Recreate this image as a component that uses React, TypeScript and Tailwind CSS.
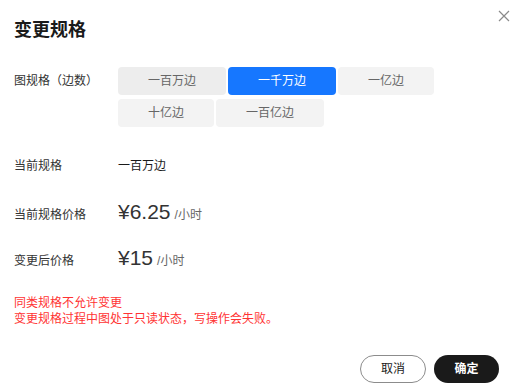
import React from 'react';

const specs = ['一百万边', '一千万边', '一亿边', '十亿边', '一百亿边'];

const font = { fontFamily: '"Liberation Sans", "Noto Sans CJK SC", sans-serif' };

const App = () => {
  const selected = 1;

  return (
    <div className="relative w-[523px] h-[392px] bg-white text-[#333] overflow-hidden" style={font}>
      {/* close */}
      <button className="absolute top-[9px] right-[13px] w-[13px] h-[13px] flex items-center justify-center text-[#8a8a8a]">
        <svg width="12" height="12" viewBox="0 0 12 12" fill="none" stroke="currentColor" strokeWidth="1.2">
          <path d="M1 1L11 11M11 1L1 11" />
        </svg>
      </button>

      <div className="pl-[14px] pt-[18px]">
        <h1 className="text-[18px] leading-[24px] font-bold text-[#1a1a1a]">变更规格</h1>

        <div className="mt-[25px] flex">
          <div className="w-[104px] text-[12px] leading-[28px] text-[#333]">图规格（边数）</div>
          <div className="flex flex-wrap w-[320px] gap-x-[2px] gap-y-[4px]">
            {specs.map((s, i) => (
              <button
                key={s}
                className={
                  i === selected
                    ? 'h-[28px] px-[30px] rounded-[4px] bg-[#1677ff] text-white text-[12px]'
                    : i === 0
                    ? 'h-[28px] px-[30px] rounded-[4px] bg-[#ededed] text-[#666] text-[12px]'
                    : 'h-[28px] px-[30px] rounded-[4px] bg-[#f3f3f3] text-[#666] text-[12px]'
                }
              >
                {s}
              </button>
            ))}
          </div>
        </div>

        <div className="mt-[29px] flex items-baseline h-[20px]">
          <div className="w-[104px] text-[12px] leading-[20px]">当前规格</div>
          <div className="text-[12px] leading-[20px] text-[#1a1a1a]">一百万边</div>
        </div>

        <div className="mt-[22px] flex items-baseline h-[28px]">
          <div className="w-[104px] text-[12px] leading-[28px]">当前规格价格</div>
          <div className="text-[21px] leading-[28px] text-[#333]">¥6.25</div>
          <div className="ml-[4px] text-[12px] text-[#666]">/小时</div>
        </div>

        <div className="mt-[18px] flex items-baseline h-[28px]">
          <div className="w-[104px] text-[12px] leading-[28px]">变更后价格</div>
          <div className="text-[21px] leading-[28px] text-[#333]">¥15</div>
          <div className="ml-[4px] text-[12px] text-[#666]">/小时</div>
        </div>

        <div className="mt-[23px] text-[12px] leading-[16px] text-[#ff3333]">
          <p>同类规格不允许变更</p>
          <p>变更规格过程中图处于只读状态，写操作会失败。</p>
        </div>
      </div>

      <div className="absolute bottom-[9px] right-[24px] flex gap-[8px]">
        <button className="w-[66px] h-[28px] rounded-full border border-[#8c8c8c] text-[12px] text-[#1a1a1a] bg-white">
          取消
        </button>
        <button className="w-[65px] h-[28px] rounded-full bg-[#1a1a1a] text-[12px] text-white font-bold">
          确定
        </button>
      </div>
    </div>
  );
};

export default App;
